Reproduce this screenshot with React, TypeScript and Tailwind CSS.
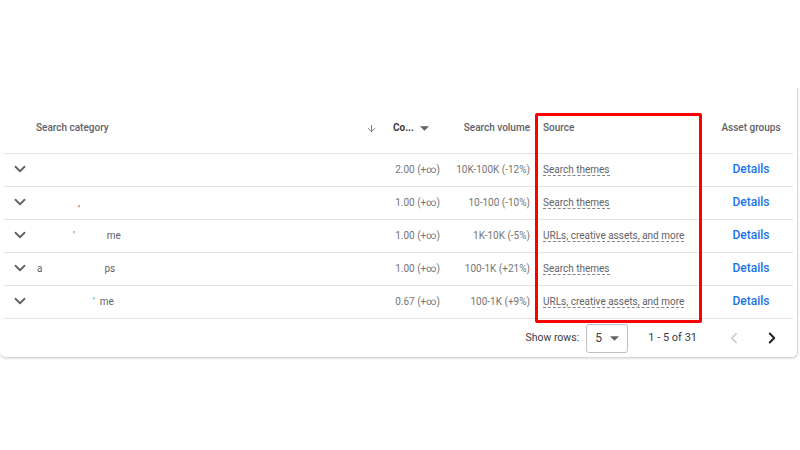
import { ChevronDown, ChevronLeft, ChevronRight, ArrowDown } from "lucide-react"

interface Row {
  category: React.ReactNode
  conversions: string
  volume: string
  source: string
}

const rows: Row[] = [
  { category: null, conversions: "2.00 (+∞)", volume: "10K-100K (-12%)", source: "Search themes" },
  { category: <span className="pl-[42px]">,</span>, conversions: "1.00 (+∞)", volume: "10-100 (-10%)", source: "Search themes" },
  { category: <span className="pl-[37px]">'<span className="pl-[32px]">me</span></span>, conversions: "1.00 (+∞)", volume: "1K-10K (-5%)", source: "URLs, creative assets, and more" },
  { category: <span className="pl-[1px]">a<span className="pl-[62px]">ps</span></span>, conversions: "1.00 (+∞)", volume: "100-1K (+21%)", source: "Search themes" },
  { category: <span className="pl-[57px]">'<span className="pl-[5px]">me</span></span>, conversions: "0.67 (+∞)", volume: "100-1K (+9%)", source: "URLs, creative assets, and more" },
]

function DropTriangle({ className }: { className?: string }) {
  return (
    <svg viewBox="0 0 10 5" className={className} fill="currentColor">
      <path d="M0 0h10L5 5z" />
    </svg>
  )
}

export default function App() {
  return (
    <div
      className="relative h-[450px] w-[800px] overflow-hidden bg-white text-[10px] text-[#5f6368] antialiased"
      style={{ fontFamily: "Roboto, 'Liberation Sans', sans-serif" }}
    >
      <div className="mt-[88px] w-[798px] rounded-br-md rounded-bl-md border-r border-b border-[#d5d7da] pl-[4px] pr-[4px] shadow-[0_1px_2px_rgba(60,64,67,0.15)]">
        {/* header */}
        <div className="flex h-[66px] items-start border-b border-[#e3e3e3] pt-[33px] font-medium leading-[14px]">
          <div className="w-[32px]" />
          <div className="flex flex-1 items-center justify-between pr-[8px]">
            <span>Search category</span>
            <ArrowDown className="h-[11px] w-[11px]" strokeWidth={1.8} />
          </div>
          <div className="flex w-[55px] items-center gap-[6px] pl-[8px] font-bold text-[#3c4043]">
            <span>Co...</span>
            <DropTriangle className="h-[5px] w-[9px] text-[#5f6368]" />
          </div>
          <div className="w-[95px] pr-[5px] text-right">Search volume</div>
          <div className="w-[166px] pl-[8px]">Source</div>
          <div className="w-[92px] pl-[8px] text-center">Asset groups</div>
        </div>

        {/* rows */}
        {rows.map((row, i) => (
          <div key={i} className="flex h-[33px] items-center border-b border-[#e3e3e3] pb-[2px]">
            <div className="flex w-[32px] justify-center">
              <ChevronDown className="h-[18px] w-[18px] text-[#5f6368]" strokeWidth={2.4} />
            </div>
            <div className="flex-1 text-[#5f6368]">{row.category}</div>
            <div className="w-[55px] text-right text-[#757575]">{row.conversions}</div>
            <div className="w-[95px] pr-[5px] text-right text-[#757575]">{row.volume}</div>
            <div className="w-[166px] pl-[8px]">
              <span className="border-b border-dashed border-[#80868b] leading-[12px] text-[#5f6368]">{row.source}</span>
            </div>
            <div className="w-[92px] pl-[8px] text-center text-[12px] font-medium text-[#1a73e8]">Details</div>
          </div>
        ))}

        {/* footer */}
        <div className="flex h-[38px] items-center justify-end text-[10.5px] text-[#3c4043]">
          <span>Show rows:</span>
          <div className="ml-[7px] flex h-[29px] w-[42px] items-center gap-[8px] rounded-[3px] border border-[#bdc1c6] pl-[8px] text-[12px]">
            <span>5</span>
            <DropTriangle className="h-[5px] w-[9px] text-[#5f6368]" />
          </div>
          <span className="ml-[20px] text-[11px]">1 - 5 of 31</span>
          <ChevronLeft className="ml-[28px] h-[18px] w-[18px] text-[#c4c7cb]" strokeWidth={2} />
          <ChevronRight className="ml-[20px] mr-[12px] h-[18px] w-[18px] text-[#202124]" strokeWidth={2.6} />
        </div>
      </div>

      {/* annotation */}
      <div className="pointer-events-none absolute left-[535px] top-[113px] h-[210px] w-[167px] rounded-[2px] border-[3px] border-[#ff0000]" />
    </div>
  )
}
